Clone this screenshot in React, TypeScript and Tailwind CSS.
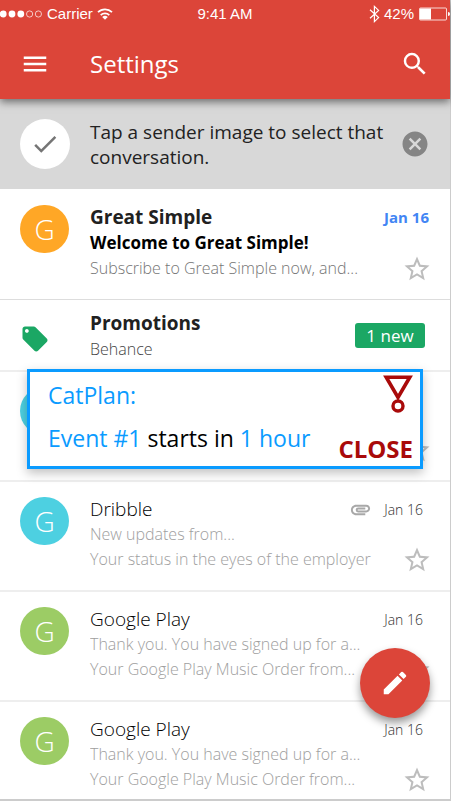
import {
  MdAttachment,
  MdCancel,
  MdCheck,
  MdEdit,
  MdLocalOffer,
  MdMenu,
  MdSearch,
  MdStarBorder,
} from "react-icons/md";

type Mail = {
  id: number;
  color: string;
  initial?: string;
  sender?: string;
  date?: string;
  lines: string[];
  attachment?: boolean;
};

const mails: Mail[] = [
  { id: 1, color: "bg-[#4dd0e1]", lines: [] },
  {
    id: 2,
    color: "bg-[#4dd0e1]",
    initial: "G",
    sender: "Dribble",
    date: "Jan 16",
    lines: ["New updates from...", "Your status in the eyes of the employer"],
    attachment: true,
  },
  {
    id: 3,
    color: "bg-[#9ccc65]",
    initial: "G",
    sender: "Google Play",
    date: "Jan 16",
    lines: ["Thank you. You have signed up for a...", "Your Google Play Music Order from..."],
  },
  {
    id: 4,
    color: "bg-[#9ccc65]",
    initial: "G",
    sender: "Google Play",
    date: "Jan 16",
    lines: ["Thank you. You have signed up for a...", "Your Google Play Music Order from..."],
  },
];

function StatusBar() {
  return (
    <div className="flex h-7 items-center justify-between font-['Liberation_Sans',Arial,sans-serif] text-[15px] leading-7">
      <div className="flex flex-1 items-center">
        <svg width="43" height="8" viewBox="0 0 43 8" className="mr-1" aria-hidden="true">
          <g fill="#fff">
            <circle cx="3.2" cy="4" r="3.4" />
            <circle cx="12" cy="4" r="3.4" />
            <circle cx="20.8" cy="4" r="3.4" />
          </g>
          <g fill="none" stroke="#fff" strokeWidth="0.7">
            <circle cx="29.6" cy="4" r="3.1" />
            <circle cx="38.4" cy="4" r="3.1" />
          </g>
        </svg>
        <span>Carrier</span>
        <svg width="16" height="12" viewBox="0 0 16 12" className="ml-1" aria-hidden="true">
          <g fill="none" stroke="#fff" strokeWidth="1.7">
            <path d="M1 4.2A10 10 0 0 1 15 4.2" />
            <path d="M3.7 7.1A6.2 6.2 0 0 1 12.3 7.1" />
          </g>
          <path d="M8 11.8L5.2 9A4 4 0 0 1 10.8 9Z" fill="#fff" />
        </svg>
      </div>
      <div className="text-center">9:41 AM</div>
      <div className="flex flex-1 items-center justify-end">
        <svg width="11" height="18" viewBox="0 0 11 18" className="mr-1" aria-hidden="true">
          <path
            d="M1 4.8L9.6 12.6L5.4 16.6V1.4L9.6 5.4L1 13.2"
            fill="none"
            stroke="#fff"
            strokeWidth="1.2"
          />
        </svg>
        <span>42%</span>
        <svg width="32" height="14" viewBox="0 0 32 14" className="ml-1" aria-hidden="true">
          <rect x="1.5" y="1" width="27" height="12" rx="1" fill="none" stroke="#fff" strokeWidth="0.8" />
          <rect x="2" y="1.5" width="11" height="11" fill="#fff" />
          <path d="M30 5v4a2 2 0 0 0 0-4z" fill="#fff" />
        </svg>
      </div>
    </div>
  );
}

function Avatar({ color, initial }: { color: string; initial?: string }) {
  return (
    <div
      className={`flex h-12 w-[49px] shrink-0 items-center justify-center rounded-full text-[28px] font-light text-white ${color}`}
    >
      {initial}
    </div>
  );
}

function StarButton() {
  return (
    <button type="button" aria-label="Star" className="flex h-[25px] shrink-0 items-center text-[#bdbdbd]">
      <MdStarBorder size={30} />
    </button>
  );
}

function MailRow({ mail }: { mail: Mail }) {
  return (
    <li className="flex h-[110px] gap-[21px] border-t-2 border-[#eeeeee] pt-[15px] pr-[18px] pl-5">
      <Avatar color={mail.color} initial={mail.initial} />
      <div className="min-w-0 flex-1 leading-[25px]">
        <div className="flex h-[25px] items-center">
          <h2 className="flex-1 text-[19px] font-light text-black">{mail.sender}</h2>
          {mail.attachment && <MdAttachment size={23} className="mr-3 text-[#a8a8a8]" />}
          <span className="mr-[9px] text-[14px] font-light text-[#333333]">{mail.date}</span>
        </div>
        <p className="h-[25px] truncate text-[16px] font-light text-[#9e9e9e]">{mail.lines[0]}</p>
        <div className="flex justify-between">
          <p className="h-[25px] text-[16px] font-light whitespace-nowrap text-[#9e9e9e]">{mail.lines[1]}</p>
          <StarButton />
        </div>
      </div>
    </li>
  );
}

function Notification() {
  return (
    <section
      role="alertdialog"
      aria-label="CatPlan"
      className="absolute top-[369px] right-[27px] left-[27px] z-20 flex h-[100px] justify-between border-[3px] border-[#0a9bff] bg-white pr-[7px] pl-[18px] shadow-[0_4px_10px_rgba(0,0,0,0.25)]"
    >
      <div className="pt-[2px] text-[23px] leading-[43px] whitespace-nowrap text-black">
        <p className="text-[#0a9bff]">CatPlan:</p>
        <p>
          <span className="text-[#0a9bff]">Event #1</span> starts in{" "}
          <span className="text-[#0a9bff]">1 hour</span>
        </p>
      </div>
      <div className="flex flex-col items-end justify-between pt-[3px]">
        <svg width="30" height="38" viewBox="0 0 30 38" fill="none" stroke="#a90a0a" aria-hidden="true">
          <path d="M3.2 2.2H26.8L15 22.5Z" strokeWidth="3.6" />
          <circle cx="15" cy="31" r="5" strokeWidth="3.4" />
        </svg>
        <button type="button" className="text-[24px] leading-[34px] font-bold text-[#a90a0a]">
          CLOSE
        </button>
      </div>
    </section>
  );
}

export default function App() {
  return (
    <div className="relative border-r border-b-2 border-[#cccccc] bg-white font-['Open_Sans','Noto_Sans',sans-serif]">
      <header className="relative z-10 bg-[#dc4539] text-white shadow-[0_3px_8px_rgba(0,0,0,0.5)]">
        <StatusBar />
        <div className="flex h-[71px] items-center px-5">
          <button type="button" aria-label="Menu">
            <MdMenu size={30} />
          </button>
          <h1 className="ml-10 flex-1 text-[24px]">Settings</h1>
          <button type="button" aria-label="Search">
            <MdSearch size={30} />
          </button>
        </div>
      </header>

      <div className="flex h-[90px] items-center bg-[#d8d8d8] px-5">
        <div className="flex size-[50px] shrink-0 items-center justify-center rounded-full bg-white text-[#757575]">
          <MdCheck size={30} />
        </div>
        <p className="ml-5 flex-1 pt-[2px] text-[19px] leading-[25px] text-[#222222]">
          Tap a sender image to select that conversation.
        </p>
        <button type="button" aria-label="Dismiss" className="text-[#858585]">
          <MdCancel size={30} />
        </button>
      </div>

      <main>
        <article className="flex h-[111px] gap-[21px] border-b border-[#dddddd] pt-4 pr-[18px] pl-5">
          <Avatar color="bg-[#ffa726]" initial="G" />
          <div className="min-w-0 flex-1 leading-[25px]">
            <div className="flex items-center justify-between">
              <h2 className="text-[19px] font-bold text-[#212121]">Great Simple</h2>
              <span className="mr-[3px] text-[15px] font-bold text-[#4285f4]">Jan 16</span>
            </div>
            <p className="text-[17px] leading-[26px] font-bold text-black">Welcome to Great Simple!</p>
            <div className="flex justify-between">
              <p className="text-[16px] font-light whitespace-nowrap text-[#757575]">
                Subscribe to Great Simple now, and...
              </p>
              <StarButton />
            </div>
          </div>
        </article>

        <article className="flex h-[70px] items-center pr-[25px] pl-5">
          <MdLocalOffer size={30} className="mt-2 shrink-0 text-[#1ba764]" />
          <div className="ml-10 flex-1 pt-[2px] leading-[26px]">
            <h2 className="text-[19px] font-bold text-[#212121]">Promotions</h2>
            <p className="text-[16px] font-light text-[#444444]">Behance</p>
          </div>
          <span className="w-[70px] rounded-[3px] bg-[#1ba764] text-center text-[17px] leading-[25px] text-white">
            1 new
          </span>
        </article>

        <ul className="h-[429px] overflow-hidden">
          {mails.map((mail) => (
            <MailRow key={mail.id} mail={mail} />
          ))}
        </ul>
      </main>

      <Notification />

      <button
        type="button"
        aria-label="Compose"
        className="absolute right-5 bottom-[81px] z-20 flex size-[70px] items-center justify-center rounded-full bg-[#dc4539] text-white shadow-[0_5px_8px_rgba(0,0,0,0.4)]"
      >
        <MdEdit size={30} />
      </button>
    </div>
  );
}
